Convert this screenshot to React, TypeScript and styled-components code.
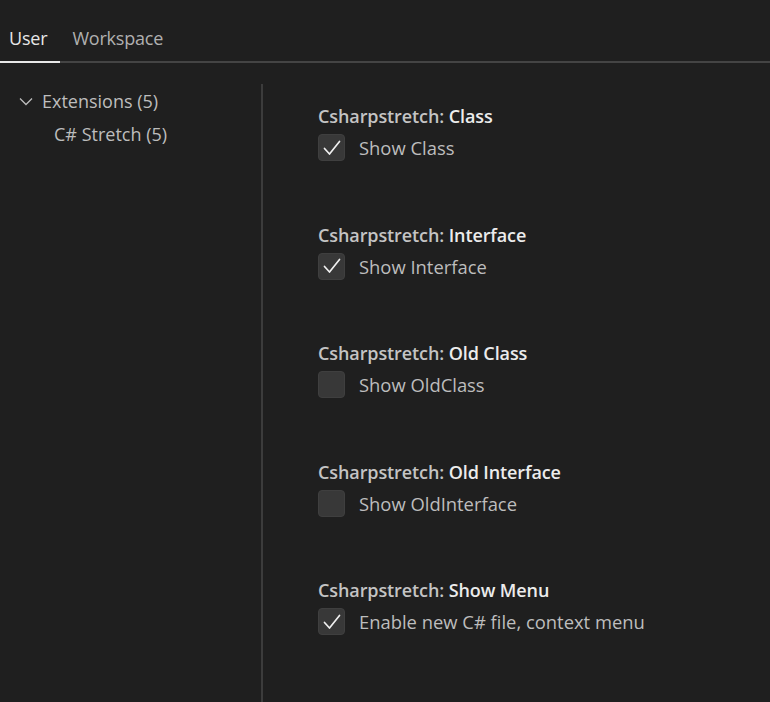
import React from 'react';
import styled, { createGlobalStyle } from 'styled-components';

const GlobalStyle = createGlobalStyle`
  html, body {
    margin: 0;
    padding: 0;
    background: #1f1f1f;
  }
  body {
    font-family: "Open Sans", "Noto Sans", sans-serif;
  }
`;

const Page = styled.div`
  width: 770px;
  height: 702px;
  background: #1f1f1f;
  display: flex;
  flex-direction: column;
  overflow: hidden;
`;

const TabBar = styled.div`
  display: flex;
  height: 63px;
  border-bottom: 2px solid #444444;
  box-sizing: border-box;
  align-items: flex-end;
`;

const Tab = styled.div<{ $active?: boolean }>`
  font-size: 18px;
  color: ${(p) => (p.$active ? '#e7e7e7' : '#b0b0b0')};
  padding: 0 12px 11px 12px;
  margin-bottom: -2px;
  border-bottom: 2px solid ${(p) => (p.$active ? '#e7e7e7' : 'transparent')};
  letter-spacing: -0.2px;
  &:first-child {
    padding-left: 9px;
    padding-right: 13px;
  }
`;

const Body = styled.div`
  flex: 1;
  display: flex;
  padding-top: 21px;
`;

const Tree = styled.div`
  width: 263px;
  flex-shrink: 0;
  border-right: 2px solid #3c3c3c;
  box-sizing: border-box;
`;

const TreeRow = styled.div<{ $indent: number }>`
  display: flex;
  align-items: center;
  height: 33px;
  padding-left: ${(p) => p.$indent}px;
  font-size: 18px;
  color: #bdbdbd;
`;

const Chevron = styled.svg`
  width: 16px;
  height: 16px;
  margin-right: 8px;
`;

const Settings = styled.div`
  flex: 1;
  padding: 20px 0 0 55px;
  display: flex;
  flex-direction: column;
  gap: 61.6px;
`;

const Item = styled.div`
  display: flex;
  flex-direction: column;
  gap: 6px;
`;

const Title = styled.div`
  font-size: 18px;
  font-weight: 600;
  color: #c4c4c4;
  letter-spacing: -0.1px;
  line-height: 24px;
`;

const Key = styled.span`
  color: #ececec;
`;

const Row = styled.label`
  display: flex;
  align-items: center;
  gap: 14px;
`;

const Box = styled.span`
  width: 27px;
  height: 27px;
  border-radius: 4px;
  background: #383838;
  border: 1px solid #3f3f3f;
  box-sizing: border-box;
  display: flex;
  align-items: center;
  justify-content: center;
`;

const Label = styled.span`
  font-size: 18.4px;
  color: #bdbdbd;
`;

const items = [
  { key: 'Class', label: 'Show Class', checked: true },
  { key: 'Interface', label: 'Show Interface', checked: true },
  { key: 'Old Class', label: 'Show OldClass', checked: false },
  { key: 'Old Interface', label: 'Show OldInterface', checked: false },
  { key: 'Show Menu', label: 'Enable new C# file, context menu', checked: true },
];

const Check = () => (
  <svg width="20" height="20" viewBox="0 0 20 20" fill="none">
    <path d="M2.5 10.5 L7.5 16 L17.5 3.5" stroke="#f0f0f0" strokeWidth="1.7" strokeLinecap="round" strokeLinejoin="round" />
  </svg>
);

const App: React.FC = () => {
  return (
    <Page>
      <GlobalStyle />
      <TabBar>
        <Tab $active>User</Tab>
        <Tab>Workspace</Tab>
      </TabBar>
      <Body>
        <Tree>
          <TreeRow $indent={18}>
            <Chevron viewBox="0 0 16 16" fill="none">
              <path d="M2 5.5 L8 11.5 L14 5.5" stroke="#bdbdbd" strokeWidth="1.3" />
            </Chevron>
            Extensions (5)
          </TreeRow>
          <TreeRow $indent={54}>C# Stretch (5)</TreeRow>
        </Tree>
        <Settings>
          {items.map((it) => (
            <Item key={it.key}>
              <Title>
                Csharpstretch: <Key>{it.key}</Key>
              </Title>
              <Row>
                <Box>{it.checked && <Check />}</Box>
                <Label>{it.label}</Label>
              </Row>
            </Item>
          ))}
        </Settings>
      </Body>
    </Page>
  );
};

export default App;
